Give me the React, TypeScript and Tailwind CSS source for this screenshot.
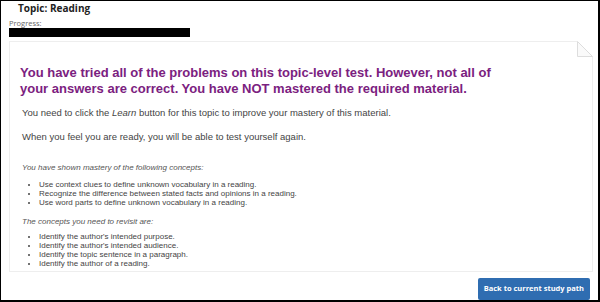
import React from 'react';

const mastered = [
  'Use context clues to define unknown vocabulary in a reading.',
  'Recognize the difference between stated facts and opinions in a reading.',
  'Use word parts to define unknown vocabulary in a reading.',
];

const revisit = [
  "Identify the author's intended purpose.",
  "Identify the author's intended audience.",
  'Identify the topic sentence in a paragraph.',
  'Identify the author of a reading.',
];

const ConceptList: React.FC<{ items: string[] }> = ({ items }) => (
  <ul className="list-disc pl-[19px] text-[8px] leading-[9px] text-[#444]">
    {items.map((item) => (
      <li key={item}>{item}</li>
    ))}
  </ul>
);

export default function App() {
  return (
    <div className="w-[600px] h-[302px] bg-white border-t border-l border-r-[2px] border-b-[2px] border-black overflow-hidden flex flex-col">
      {/* Header */}
      <div className="px-[8px]">
        <h2 className="pl-[9px] text-[10px] leading-[14px] font-bold text-[#222] font-['Open_Sans',sans-serif]">
          Topic: Reading
        </h2>
        <div className="mt-[3px] text-[7.5px] leading-[10px] text-[#666] font-['Open_Sans',sans-serif]">
          Progress:
        </div>
        <div className="w-[181px] h-[9px] bg-black" />
      </div>

      {/* Result panel */}
      <div className="relative ml-[8px] mr-[5px] mt-[4px] h-[232px] border border-[#eee] font-['Liberation_Sans',Arial,sans-serif]">
        <svg className="absolute -top-px -right-px" width="16" height="16" viewBox="0 0 16 16">
          <rect x="0" y="0" width="16" height="16" fill="white" />
          <path d="M0.5 0.5 L0.5 15.5 L15.5 15.5 Z" fill="#fafafa" stroke="#ddd" strokeWidth="1" />
        </svg>

        <div className="pl-[10px] pr-[20px] pt-[23px]">
          <h1 className="max-w-[490px] text-[13px] leading-[16px] font-bold text-[#7b2180]">
            You have tried all of the problems on this topic-level test. However, not all of your answers are correct. You have NOT mastered the required material.
          </h1>
          <p className="mt-[10px] pl-[2px] text-[9.5px] leading-[12px] text-[#444]">
            You need to click the <em>Learn</em> button for this topic to improve your mastery of this material.
          </p>
          <p className="mt-[12px] pl-[2px] text-[9.5px] leading-[12px] text-[#444]">
            When you feel you are ready, you will be able to test yourself again.
          </p>

          <p className="mt-[20px] pl-[2px] text-[8px] leading-[10px] italic text-[#555]">
            You have shown mastery of the following concepts:
          </p>
          <div className="mt-[7px]">
            <ConceptList items={mastered} />
          </div>

          <p className="mt-[10px] pl-[2px] text-[8px] leading-[10px] italic text-[#555]">
            The concepts you need to revisit are:
          </p>
          <div className="mt-[5px]">
            <ConceptList items={revisit} />
          </div>
        </div>
      </div>

      {/* Footer */}
      <div className="flex justify-end pr-[8px] mt-[6px]">
        <button className="h-[22px] px-[6px] rounded-[2px] bg-[#2f6db1] text-white text-[7.5px] font-bold font-['Open_Sans',sans-serif]">
          Back to current study path
        </button>
      </div>
    </div>
  );
}
